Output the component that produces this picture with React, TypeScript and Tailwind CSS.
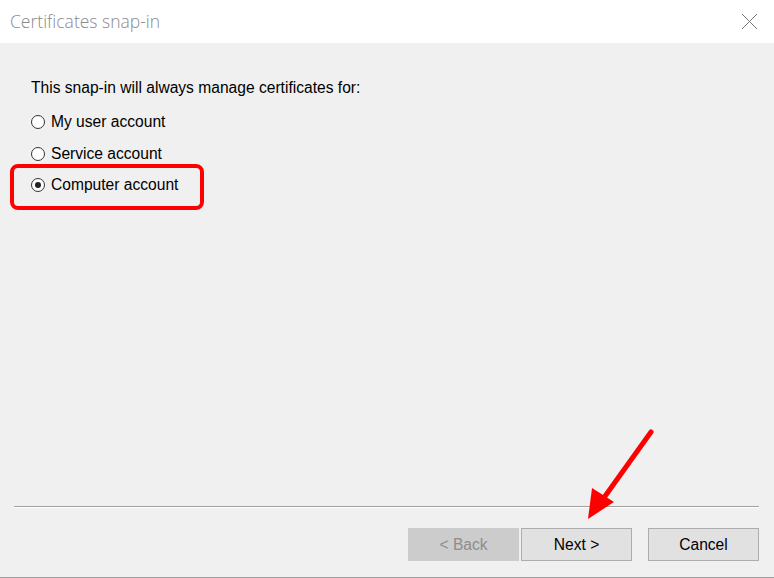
import React from "react";

function Radio({ checked, label }: { checked?: boolean; label: string }) {
  return (
    <div className="flex items-center h-[20px]">
      <div className="w-[14px] h-[14px] rounded-full border border-[#333] bg-white flex items-center justify-center">
        {checked && <div className="w-[6px] h-[6px] rounded-full bg-[#222]" />}
      </div>
      <span className="ml-[6px]">{label}</span>
    </div>
  );
}

export default function App() {
  return (
    <div className="relative w-[774px] h-[578px] bg-[#f0f0f0] flex flex-col overflow-hidden text-[15.6px] text-black" style={{ fontFamily: '"Liberation Sans", Arial, sans-serif' }}>
      <div className="h-[43px] bg-white flex items-center justify-between pl-[10px] pr-[16px] shrink-0">
        <span className="text-[17.5px] text-[#8a8a8a] font-light" style={{ fontFamily: '"Open Sans", "Noto Sans", sans-serif' }}>Certificates snap-in</span>
        <svg width="17" height="17" viewBox="0 0 17 17">
          <path d="M1 1 L16 16 M16 1 L1 16" stroke="#777" strokeWidth="1" fill="none" />
        </svg>
      </div>
      <div className="flex-1 flex flex-col pl-[31px] pt-[35px]">
        <div className="h-[20px] flex items-center">This snap-in will always manage certificates for:</div>
        <div className="mt-[14px] flex flex-col gap-[11.5px]">
          <Radio label="My user account" />
          <Radio label="Service account" />
          <Radio checked label="Computer account" />
        </div>
      </div>
      <div className="ml-[14px] mr-[15px] h-[2px] border-t border-[#a0a0a0] border-b border-b-white shrink-0" />
      <div className="flex justify-end items-start pt-[20px] pr-[15px] h-[69px] shrink-0">
        <div className="w-[111px] h-[33px] bg-[#cccccc] flex items-center justify-center text-[#8d8d8d]">&lt; Back</div>
        <div className="ml-[2px] w-[111px] h-[33px] bg-[#e1e1e1] border border-[#adadad] flex items-center justify-center">Next &gt;</div>
        <div className="ml-[16px] w-[111px] h-[33px] bg-[#e1e1e1] border border-[#adadad] flex items-center justify-center">Cancel</div>
      </div>
      <div className="h-[1px] bg-[#a0a0a0] shrink-0" />
      <div className="absolute left-[10px] top-[164px] w-[194px] h-[46px] border-[4px] border-[#ff0000] rounded-[8px]" />
      <svg className="absolute left-0 top-0 pointer-events-none" width="774" height="578">
        <line x1="651" y1="432" x2="598" y2="506" stroke="#ff0000" strokeWidth="5" strokeLinecap="round" />
        <polygon points="588,519 592,488 614,502" fill="#ff0000" />
      </svg>
    </div>
  );
}
